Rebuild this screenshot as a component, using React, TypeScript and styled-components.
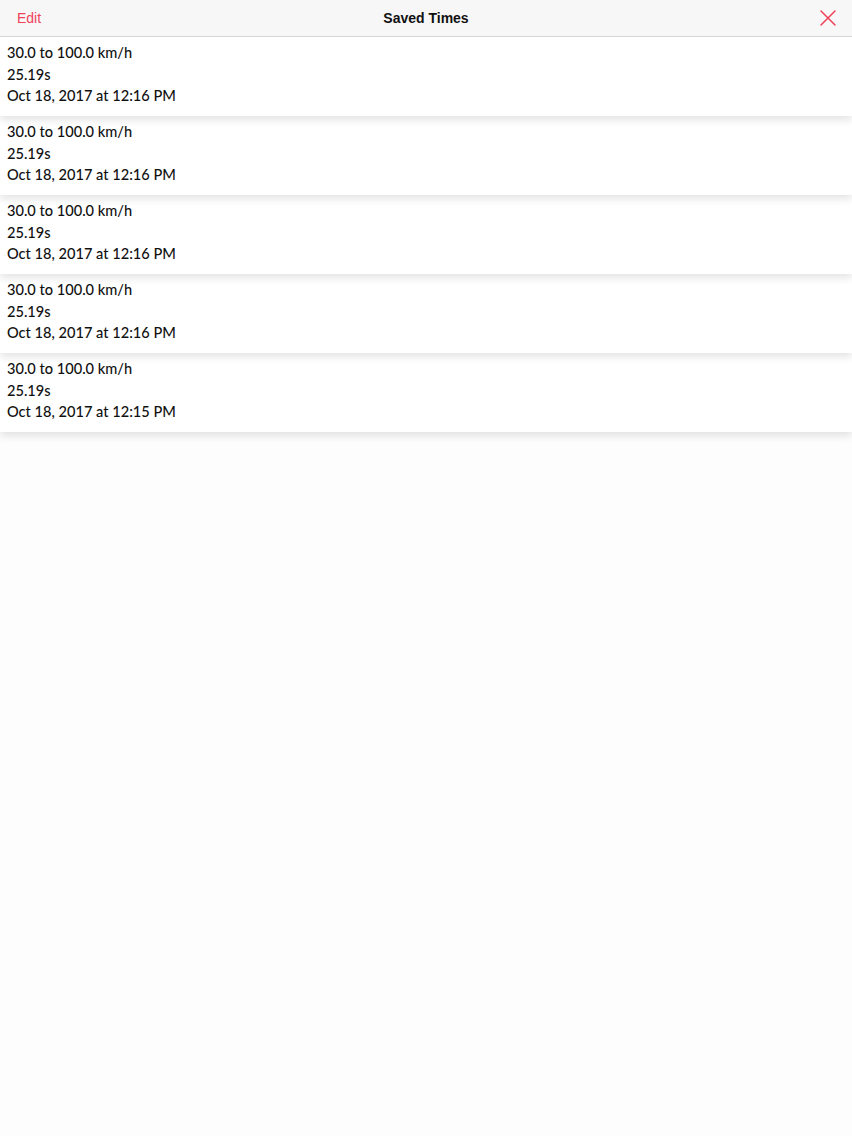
import styled, { createGlobalStyle } from "styled-components";

const GlobalStyle = createGlobalStyle`
  html, body {
    margin: 0;
    padding: 0;
    background: #fdfdfd;
  }
  body {
    font-family: "Liberation Sans", Arial, sans-serif;
  }
`;

type SavedTime = {
  range: string;
  time: string;
  date: string;
};

const savedTimes: SavedTime[] = [
  { range: "30.0 to 100.0 km/h", time: "25.19s", date: "Oct 18, 2017 at 12:16 PM" },
  { range: "30.0 to 100.0 km/h", time: "25.19s", date: "Oct 18, 2017 at 12:16 PM" },
  { range: "30.0 to 100.0 km/h", time: "25.19s", date: "Oct 18, 2017 at 12:16 PM" },
  { range: "30.0 to 100.0 km/h", time: "25.19s", date: "Oct 18, 2017 at 12:16 PM" },
  { range: "30.0 to 100.0 km/h", time: "25.19s", date: "Oct 18, 2017 at 12:15 PM" },
];

const App = (): JSX.Element => {
  return (
    <Page>
      <GlobalStyle />
      <NavBar>
        <EditButton>Edit</EditButton>
        <Title>Saved Times</Title>
        <CloseButton aria-label="close">
          <svg width="16" height="16" viewBox="0 0 16 16">
            <path d="M1 1 L15 15 M15 1 L1 15" stroke="#f0405a" strokeWidth="1.5" strokeLinecap="round" />
          </svg>
        </CloseButton>
      </NavBar>
      <List>
        {savedTimes.map((item, i) => (
          <Row key={i} $layer={savedTimes.length - i}>
            <Line>{item.range}</Line>
            <Line>{item.time}</Line>
            <Line>{item.date}</Line>
          </Row>
        ))}
      </List>
    </Page>
  );
};

export default App;

/* =================================================== */
const Page = styled.div`
  width: 852px;
  min-height: 1136px;
  background: #fdfdfd;
`;

const NavBar = styled.div`
  height: 36px;
  display: flex;
  align-items: center;
  justify-content: space-between;
  padding: 0 16px 0 17px;
  background: #f7f7f7;
  border-bottom: 1px solid #d6d6d6;
  position: relative;
  z-index: 10;
`;

const EditButton = styled.button`
  border: none;
  background: none;
  padding: 0;
  font-family: "Liberation Sans", Arial, sans-serif;
  font-size: 14px;
  color: #f0405a;
`;

const Title = styled.div`
  position: absolute;
  left: 0;
  right: 0;
  text-align: center;
  font-family: "Liberation Sans", Arial, sans-serif;
  font-size: 14px;
  font-weight: bold;
  color: #111;
  pointer-events: none;
`;

const CloseButton = styled.button`
  border: none;
  background: none;
  padding: 0;
  display: flex;
  align-items: center;
`;

const List = styled.div`
  display: flex;
  flex-direction: column;
`;

const Row = styled.div<{ $layer: number }>`
  height: 79px;
  box-sizing: border-box;
  padding: 5px 7px 0;
  background: #fff;
  position: relative;
  z-index: ${(p) => p.$layer};
  box-shadow: 0 4px 8px rgba(0, 0, 0, 0.11);
`;

const Line = styled.div`
  font-family: "Lato", "Liberation Sans", sans-serif;
  font-size: 14.6px;
  font-weight: 500;
  line-height: 21.5px;
  color: #111;
`;
